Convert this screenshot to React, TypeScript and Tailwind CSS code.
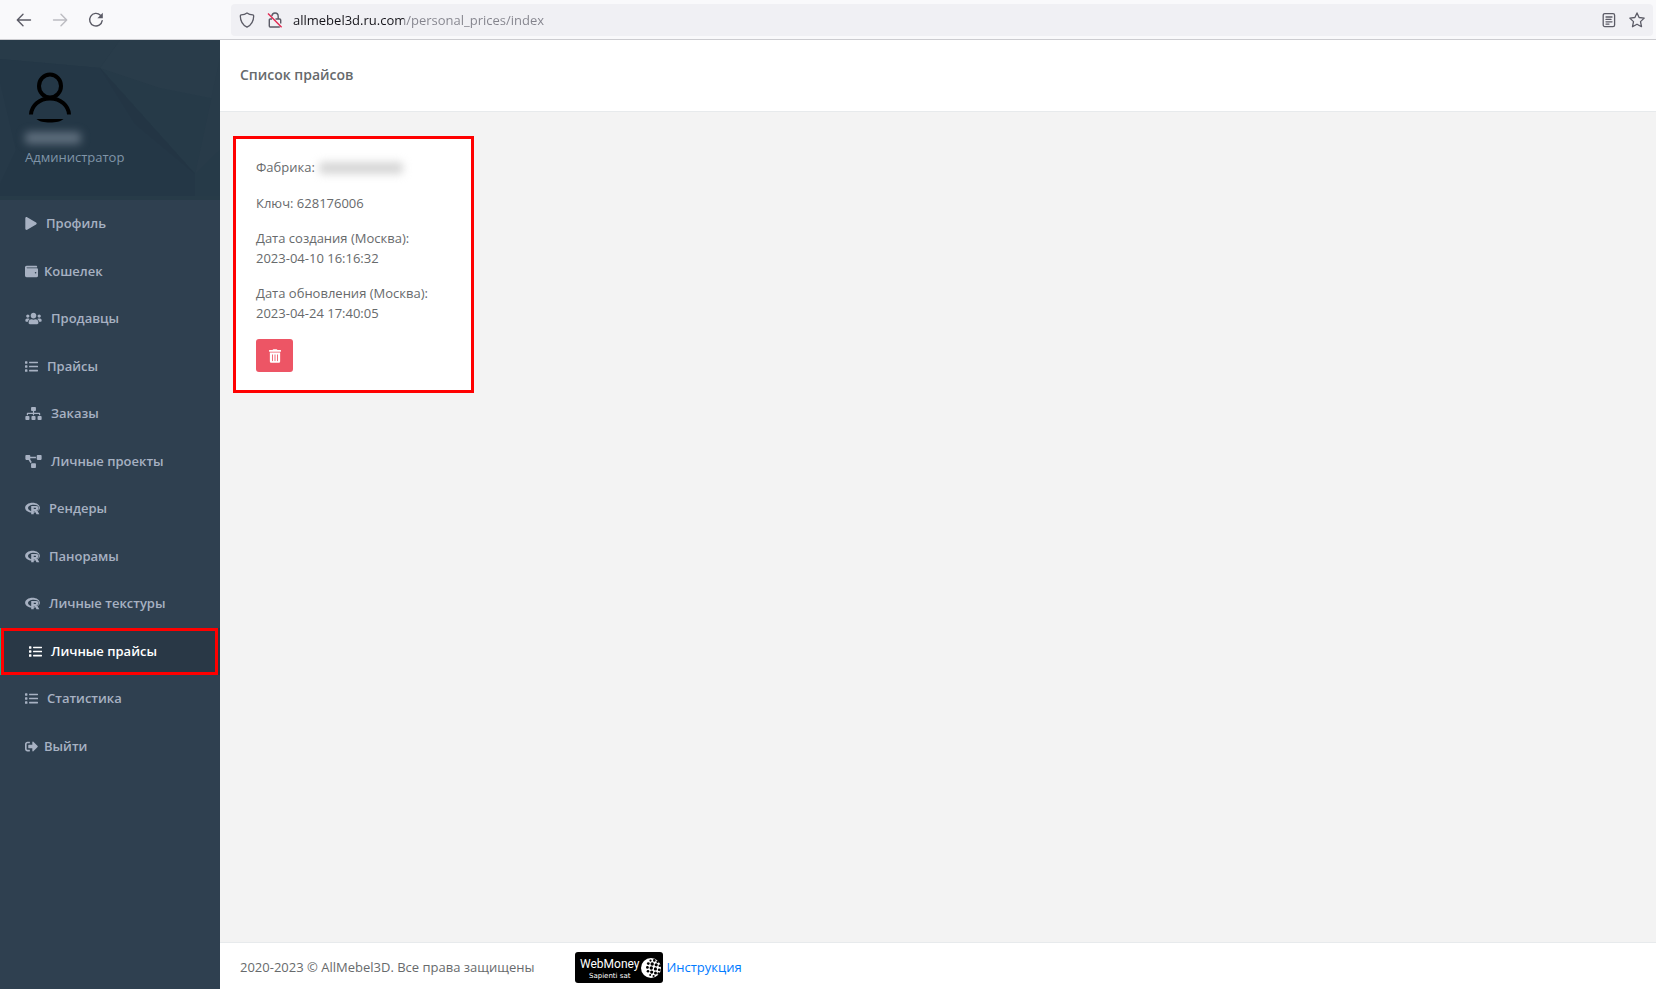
import React from "react";
import type { IconType } from "react-icons";
import {
  FaList,
  FaPlay,
  FaProjectDiagram,
  FaRProject,
  FaSignOutAlt,
  FaSitemap,
  FaTrashAlt,
  FaUsers,
  FaWallet,
} from "react-icons/fa";

type MenuItem = { label: string; icon: IconType; size: string; active?: boolean };

const menu: MenuItem[] = [
  { label: "Профиль", icon: FaPlay, size: "w-[12px] mr-[9px]" },
  { label: "Кошелек", icon: FaWallet, size: "w-[13px] mr-[6px]" },
  { label: "Продавцы", icon: FaUsers, size: "w-[17px] mr-[9px]" },
  { label: "Прайсы", icon: FaList, size: "w-[13px] mr-[9px]" },
  { label: "Заказы", icon: FaSitemap, size: "w-[17px] mr-[9px]" },
  { label: "Личные проекты", icon: FaProjectDiagram, size: "w-[17px] mr-[9px]" },
  { label: "Рендеры", icon: FaRProject, size: "w-[15px] mr-[9px]" },
  { label: "Панорамы", icon: FaRProject, size: "w-[15px] mr-[9px]" },
  { label: "Личные текстуры", icon: FaRProject, size: "w-[15px] mr-[9px]" },
  { label: "Личные прайсы", icon: FaList, size: "w-[13px] mr-[9px]", active: true },
  { label: "Статистика", icon: FaList, size: "w-[13px] mr-[9px]" },
  { label: "Выйти", icon: FaSignOutAlt, size: "w-[13px] mr-[6px]" },
];

function BrowserBar() {
  return (
    <div className="flex h-10 items-center border-b border-[#ccccd0] bg-[#f9f9fb] pr-[3px] text-[#5b5b66]">
      <div className="flex w-[231px] shrink-0 items-center gap-5 pl-4">
        <button aria-label="Назад">
          <svg viewBox="0 0 16 16" className="size-4" fill="none" stroke="currentColor" strokeWidth="1.4" strokeLinecap="round" strokeLinejoin="round">
            <path d="M14.5 8H1.5M7 2.2L1.3 8L7 13.8" />
          </svg>
        </button>
        <button aria-label="Вперед" className="text-[#bcbcc2]" disabled>
          <svg viewBox="0 0 16 16" className="size-4" fill="none" stroke="currentColor" strokeWidth="1.4" strokeLinecap="round" strokeLinejoin="round">
            <path d="M1.5 8H14.5M9 2.2L14.7 8L9 13.8" />
          </svg>
        </button>
        <button aria-label="Обновить">
          <svg viewBox="0 0 16 16" className="size-4" fill="none" stroke="currentColor" strokeWidth="1.4" strokeLinecap="round">
            <path d="M12.4 3.2A6.3 6.3 0 1 0 14.2 8.6" />
            <path d="M14.8 .8V6.2H9.4Z" fill="currentColor" stroke="none" />
          </svg>
        </button>
      </div>
      <div className="flex h-8 flex-1 items-center rounded bg-[#f0f0f4] px-2">
        <svg viewBox="0 0 16 16" className="size-4 shrink-0" fill="none" stroke="currentColor" strokeWidth="1.3" strokeLinejoin="round">
          <path d="M8 .9C6.4 2.1 4.4 2.7 2.2 2.9C1.6 3 1.3 3.4 1.3 4C1.4 9.4 3.6 13 8 15.2C12.4 13 14.6 9.4 14.7 4C14.7 3.4 14.4 3 13.8 2.9C11.6 2.7 9.6 2.1 8 .9Z" />
        </svg>
        <svg viewBox="0 0 16 16" className="ml-3 size-4 shrink-0" fill="none" stroke="currentColor" strokeWidth="1.4">
          <path d="M4.8 4.2C5 2.2 6.2 1 8 1C10 1 11.2 2.4 11.2 4.4V7M5 7H3.2C2.6 7 2.3 7.3 2.3 8V14C2.3 14.6 2.6 15 3.2 15H12.8M8.5 7H12.6C13.3 7 13.7 7.4 13.7 8V11.5" />
          <path d="M1 1.6L14.6 15.2" stroke="#e22850" />
        </svg>
        <input
          type="text"
          aria-label="Адрес"
          readOnly
          value="allmebel3d.ru.com/personal_prices/index"
          className="ml-[10px] min-w-0 flex-1 bg-linear-to-r from-[#15141a] from-[111px] to-[#83838c] to-[111px] bg-clip-text pt-[2px] text-[13px] text-transparent outline-none"
        />
        <button aria-label="Режим чтения">
          <svg viewBox="0 0 16 16" className="size-4" fill="none" stroke="currentColor" strokeWidth="1.3" strokeLinecap="round">
            <rect x="2.2" y="1.6" width="11.4" height="13" rx="1.6" />
            <path d="M5 5H11M5 7.4H10M5 9.8H11M5 12.1H8" />
          </svg>
        </button>
        <button aria-label="Добавить в закладки" className="ml-3">
          <svg viewBox="0 0 16 16" className="size-4" fill="none" stroke="currentColor" strokeWidth="1.3" strokeLinejoin="round">
            <path d="M8 .9L10.1 5.5L15.2 6.1L11.5 9.6L12.5 14.7L8 12.2L3.5 14.7L4.5 9.6L.8 6.1L5.9 5.5Z" />
          </svg>
        </button>
      </div>
    </div>
  );
}

function ProfileHeader() {
  return (
    <div className="relative h-40 overflow-hidden bg-[#263a48] px-[25px] pt-8">
      <svg viewBox="0 0 220 160" preserveAspectRatio="none" className="absolute inset-0 size-full">
        <path d="M0 0H120L100 28L0 19Z" fill="#283b49" />
        <path d="M120 0H220V60L160 48L100 28Z" fill="#293c4a" />
        <path d="M0 19L100 28L195 134V156H0Z" fill="#243746" />
        <path d="M0 42L16 110L0 144Z" fill="#263948" />
        <path d="M100 28L195 134L135 84Z" fill="#233544" />
        <path d="M220 18L195 134L220 110Z" fill="#283b49" />
        <path d="M0 156H220V160H0Z" fill="#273b48" />
      </svg>
      <div className="relative">
        <svg viewBox="0 0 52 52" className="-ml-px size-[52px]" fill="none" stroke="#000" strokeWidth="4">
          <ellipse cx="26" cy="14" rx="11" ry="11.5" />
          <path d="M7 42.5C7.5 34 15 26.5 26 26.5C37 26.5 44.5 34 45 42.5" />
          <path d="M12.5 47H39.5C35 51.8 17 51.8 12.5 47Z" fill="#000" stroke="none" />
        </svg>
        <div className="mt-2 mb-[3px] h-3 w-14 rounded bg-[#8795a3]/60 blur-[4px]" />
        <p className="text-[13px] leading-5 text-[#8095a8]">Администратор</p>
      </div>
    </div>
  );
}

function Sidebar() {
  return (
    <aside className="w-[220px] shrink-0 bg-[#2f4050]">
      <ProfileHeader />
      <nav>
        <ul>
          {menu.map((item) => (
            <li key={item.label} className={item.active ? "relative border-l-4 border-[#19aa8d] bg-[#293846]" : ""}>
              <a
                href="#"
                className={`flex items-center px-[25px] py-[14px] text-[13px] leading-normal font-semibold ${item.active ? "text-white" : "text-[#a7b1c2]"}`}
              >
                <item.icon className={`h-[13px] shrink-0 ${item.size}`} />
                {item.label}
              </a>
              {item.active && <div className="absolute inset-y-0 right-[2px] -left-[3px] border-3 border-[#ff0000]" />}
            </li>
          ))}
        </ul>
      </nav>
    </aside>
  );
}

function PriceCard() {
  return (
    <div className="flex w-[241px] flex-col items-start gap-4 border-3 border-[#ff0000] bg-white px-5 pt-[19px] pb-[18px]">
      <p className="flex items-center">
        Фабрика:
        <span className="ml-1 h-3 w-[84px] rounded bg-[#c4c4c4]/70 blur-[4px]" />
      </p>
      <p>Ключ: 628176006</p>
      <p>
        Дата создания (Москва):
        <br />
        2023-04-10 16:16:32
      </p>
      <p>
        Дата обновления (Москва):
        <br />
        2023-04-24 17:40:05
      </p>
      <button aria-label="Удалить" className="flex h-[33px] w-[37px] items-center justify-center rounded-[3px] bg-[#ed5565] text-white">
        <FaTrashAlt className="h-[14px] w-[12px]" />
      </button>
    </div>
  );
}

function WebMoneyBadge() {
  return (
    <svg viewBox="0 0 88 31" className="h-[31px] w-[88px] shrink-0" role="img" aria-label="WebMoney">
      <rect width="88" height="31" rx="3" fill="#000" />
      <text x="5" y="16" fill="#fff" fontSize="12" fontFamily="Roboto, sans-serif">WebMoney</text>
      <text x="14" y="26" fill="#fff" fontSize="7" fontFamily="'DejaVu Sans', sans-serif">Sapienti sat</text>
      {/* globe */}
      <circle cx="76" cy="16" r="10" fill="#fff" />
      <g fill="#000">
        <circle cx="75.5" cy="8.6" r="1.1" />
        <circle cx="79.3" cy="8.4" r="1.3" />
        <circle cx="82.6" cy="9.8" r="1.2" />
        <circle cx="73.3" cy="11.6" r="1.4" />
        <circle cx="77.2" cy="12" r="1.7" />
        <circle cx="81.2" cy="12.8" r="1.6" />
        <circle cx="84.8" cy="13.8" r="1.3" />
        <circle cx="72.4" cy="15.4" r="1.4" />
        <circle cx="76.3" cy="16" r="1.7" />
        <circle cx="80.4" cy="16.9" r="1.6" />
        <circle cx="84.2" cy="17.8" r="1.4" />
        <circle cx="73" cy="19.3" r="1.3" />
        <circle cx="76.7" cy="20.1" r="1.6" />
        <circle cx="80.5" cy="20.9" r="1.5" />
        <circle cx="83.6" cy="21.5" r="1.2" />
        <circle cx="75.2" cy="23" r="1" />
        <circle cx="78.6" cy="24" r="1.1" />
      </g>
    </svg>
  );
}

export default function App() {
  return (
    <div className="flex min-h-screen flex-col font-['Open_Sans',sans-serif] text-[13px] leading-normal text-[#676a6c]">
      <BrowserBar />
      <div className="flex flex-1">
        <Sidebar />
        <div className="flex flex-1 flex-col bg-[#f3f3f3]">
          <header className="flex h-[72px] items-center border-b border-[#e7eaec] bg-white px-5 pb-[2px]">
            <h1 className="text-sm font-semibold">Список прайсов</h1>
          </header>
          <main className="flex-1 px-[13px] py-6">
            <PriceCard />
          </main>
          <footer className="flex h-[47px] items-center border-t border-[#e7eaec] bg-white px-5 pt-[3px]">
            <span className="mr-[41px]">2020-2023 © AllMebel3D. Все права защищены</span>
            <WebMoneyBadge />
            <a href="#" className="ml-[3px] text-[#007bff]">Инструкция</a>
          </footer>
        </div>
      </div>
    </div>
  );
}
